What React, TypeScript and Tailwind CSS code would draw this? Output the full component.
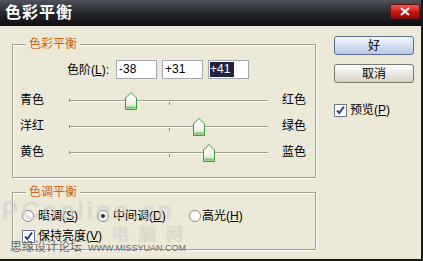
import React from 'react';

const FONT = "font-['Liberation_Sans','Noto_Sans_CJK_SC',sans-serif]";

const sliders = [
  { left: '青色', right: '红色', value: -38 },
  { left: '洋红', right: '绿色', value: 31 },
  { left: '黄色', right: '蓝色', value: 41 },
];

const TRACK_W = 199;

function Thumb() {
  return (
    <svg width="12" height="18" viewBox="0 0 12 18">
      <defs>
        <linearGradient id="thumbFill" x1="0" y1="0" x2="0" y2="1">
          <stop offset="0" stopColor="#ffffff" />
          <stop offset="0.6" stopColor="#f3f3ee" />
          <stop offset="1" stopColor="#b9e3b0" />
        </linearGradient>
      </defs>
      <path d="M6 0.5 L11.5 6 L11.5 17.5 L0.5 17.5 L0.5 6 Z" fill="url(#thumbFill)" stroke="#3f9a3c" />
      <path d="M1.5 15.5 H10.5" stroke="#7cc877" strokeWidth="2" />
    </svg>
  );
}

function SliderRow({ left, right, value }: { left: string; right: string; value: number }) {
  const pos = ((value + 100) / 200) * TRACK_W;
  return (
    <div className="flex items-center h-[26px] pl-[7px]">
      <span className="w-[49px]">{left}</span>
      <div className="relative w-[199px] h-full">
        <div className="absolute left-0 right-0 top-[13px] h-[2px] border-t border-[#9d9b90] bg-white" />
        <div className="absolute left-0 top-[12px] w-[1px] h-[3px] bg-[#8a887e]" />
        <div className="absolute left-[100px] top-[15px] w-[1px] h-[3px] bg-[#8a887e]" />
        <div className="absolute top-[5px]" style={{ left: pos - 6 }}>
          <Thumb />
        </div>
      </div>
      <span className="ml-[14px]">{right}</span>
    </div>
  );
}

function Radio({ checked }: { checked?: boolean }) {
  return (
    <span className="w-[12px] h-[12px] rounded-full border border-[#8b8a83] bg-white flex items-center justify-center shrink-0">
      {checked && <span className="w-[4px] h-[4px] rounded-full bg-[#2b2b2b]" />}
    </span>
  );
}

function Checkbox() {
  return (
    <span className="w-[13px] h-[13px] border border-[#6c7a91] bg-white flex items-center justify-center shrink-0">
      <svg width="11" height="11" viewBox="0 0 11 11">
        <path d="M2 5.5 L4.3 8 L9 1.5" fill="none" stroke="#24408c" strokeWidth="2" />
      </svg>
    </span>
  );
}

function Group({ title, className, children }: { title: string; className: string; children: React.ReactNode }) {
  return (
    <div className={`relative border border-[#a09f95] shadow-[inset_1px_1px_0_#fff,1px_1px_0_#fff] ${className}`}>
      <span className="absolute -top-[9px] left-[13px] px-[3px] leading-[16px] bg-[#ece9d8] text-[#c8661c]">{title}</span>
      {children}
    </div>
  );
}

export default function App() {
  return (
    <div className={`relative w-[423px] h-[261px] flex flex-col bg-[#ece9d8] text-[12px] text-black overflow-hidden border-r-2 border-b-2 border-[#1a1a1e] ${FONT}`}>
      {/* title bar */}
      <div className="h-[26px] flex items-center justify-between bg-gradient-to-b from-[#50525c] via-[#25262d] to-[#0e0e12] shrink-0">
        <span className="pl-[5px] text-white font-bold text-[16px] tracking-[1px]">色彩平衡</span>
        <span className="mr-[1px] -mt-[4px] w-[30px] h-[15px] rounded-[2px] border border-[#6b1010] bg-gradient-to-b from-[#ef5a5a] via-[#c91616] to-[#9c0c0c] flex items-center justify-center">
          <svg width="10" height="9" viewBox="0 0 10 9">
            <path d="M1 1 L9 8 M9 1 L1 8" stroke="#fff" strokeWidth="2" />
          </svg>
        </span>
      </div>

      <div className="flex flex-1 pl-[12px]">
        <div className="w-[304px] flex flex-col">
          <Group title="色彩平衡" className="mt-[18px] h-[134px]">
            <div className="flex items-center pt-[15px] pl-[54px]">
              <span className="w-[49px]">
                色阶(<span className="underline">L</span>):
              </span>
              <div className="flex gap-[5px]">
                <span className="w-[41px] h-[19px] border border-[#a5a9ae] bg-white pl-[2px] leading-[17px]">-38</span>
                <span className="w-[41px] h-[19px] border border-[#a5a9ae] bg-white pl-[2px] leading-[17px]">+31</span>
                <span className="w-[41px] h-[19px] border border-[#a5a9ae] bg-white pl-[1px] pt-[1px]">
                  <span className="block w-[24px] h-[15px] bg-[#1f2340] text-white leading-[15px]">+41</span>
                </span>
              </div>
            </div>
            <div className="mt-[8px]">
              {sliders.map((s) => (
                <SliderRow key={s.left} {...s} />
              ))}
            </div>
          </Group>

          <Group title="色调平衡" className="mt-[14px] h-[58px]">
            <div className="flex items-center pt-[16px] pl-[9px] h-[30px]">
              <span className="w-[75px] flex items-center gap-[4px]">
                <Radio />
                <span>暗调(<span className="underline">S</span>)</span>
              </span>
              <span className="w-[92px] flex items-center gap-[4px]">
                <Radio checked />
                <span>中间调(<span className="underline">D</span>)</span>
              </span>
              <span className="flex items-center gap-[1px]">
                <Radio />
                <span>高光(<span className="underline">H</span>)</span>
              </span>
            </div>
            <div className="flex items-center gap-[3px] pl-[9px] mt-[4px]">
              <Checkbox />
              <span>保持亮度(<span className="underline">V</span>)</span>
            </div>
          </Group>
        </div>

        <div className="ml-[18px] pt-[10px] flex flex-col">
          <button className="w-[80px] h-[19px] rounded-[3px] border border-[#5d6f91] bg-gradient-to-b from-[#f4f7fd] to-[#b8c8e6] leading-[16px]">
            好
          </button>
          <button className="mt-[9px] w-[80px] h-[19px] rounded-[3px] border border-[#7a7a72] bg-gradient-to-b from-[#ffffff] to-[#d6d2c2] leading-[16px]">
            取消
          </button>
          <div className="mt-[18px] flex items-center gap-[3px]">
            <Checkbox />
            <span>预览(<span className="underline">P</span>)</span>
          </div>
        </div>
      </div>

      {/* watermarks */}
      <div className="absolute left-[2px] top-[198px] text-[24px] leading-[26px] tracking-[4px] text-white/50 [text-shadow:0_0_1px_rgba(120,120,120,0.5)] pointer-events-none">
        PConline.cn
      </div>
      <div className="absolute left-[112px] top-[225px] text-[17px] leading-[20px] tracking-[10px] text-white/50 [text-shadow:0_0_1px_rgba(120,120,120,0.5)] pointer-events-none">
        电脑网
      </div>
      <div className="absolute left-[10px] top-[238px] flex items-baseline gap-[6px] text-[#6b6b6b] pointer-events-none">
        <span className="text-[12px]">思缘设计论坛</span>
        <span className="text-[9px]">WWW.MISSYUAN.COM</span>
      </div>
    </div>
  );
}
